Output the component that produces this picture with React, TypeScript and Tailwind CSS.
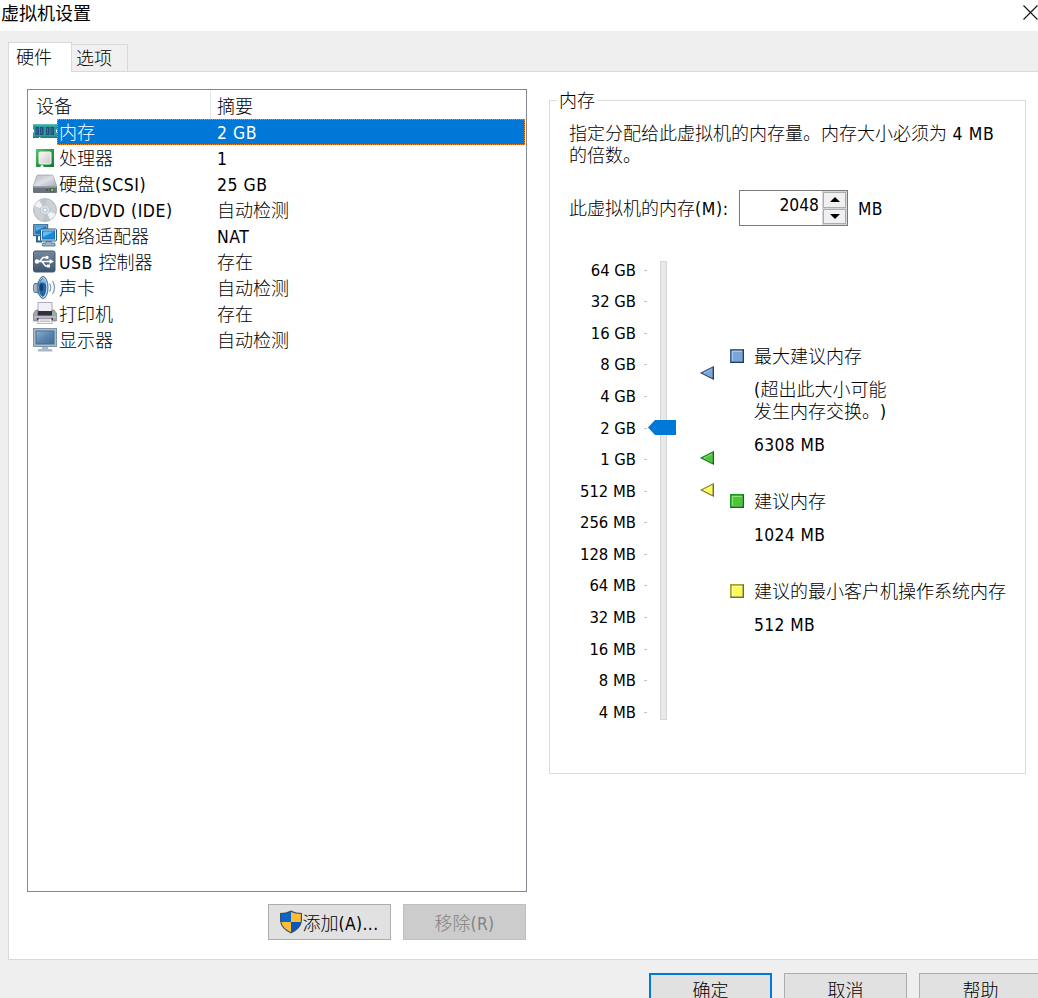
import React from "react";

const latinBase = "font-['DejaVu_Sans_Condensed','DejaVu_Sans',sans-serif] [font-stretch:condensed] leading-[0]";

function T({ children, className = "", latin = "text-[17.3px] tracking-[0.4px]" }: { children: string; className?: string; latin?: string }) {
  const runs = children.match(/[\u3000-\u9fff]+|[^\u3000-\u9fff]+/g) ?? [];
  return (
    <span className={`whitespace-pre [text-spacing-trim:space-all] ${className}`}>
      {runs.map((r, i) =>
        /[\u3000-\u9fff]/.test(r) ? (
          <span key={i} className="font-['Noto_Sans_CJK_SC',sans-serif] text-[18px] font-light">{r}</span>
        ) : (
          <span key={i} className={`${latinBase} ${latin}`}>{r}</span>
        )
      )}
    </span>
  );
}

const Ic = ({ children }: { children: React.ReactNode }) => (
  <svg className="h-[26px] w-[24px] shrink-0" viewBox="0 0 24 26">{children}</svg>
);

const icons = {
  memory: (
    <Ic>
      <path d="M0 5h24v5l-1 1v2l1 1v5H0v-5l1-1v-2l-1-1z" fill="#2f9b98" />
      <path d="M0 5h24v1.500H0z" fill="#55bdb6" />
      <path d="M2.500 8h3.500v8H2.500zM7 8h3.500v8H7zM13 8h3.500v8H13zM17.500 8H21v8h-3.500z" fill="#1d4f7c" />
      <path d="M3.500 9h1v6h-1zM8 9h1v6H8zM14 9h1v6h-1zM18.500 9h1v6h-1z" fill="#3376a8" />
      <path d="M0 17.500h24V19H0z" fill="#237977" />
      <path d="M6 18h1.500v1.500H6z" fill="#e8f8f0" />
    </Ic>
  ),
  cpu: (
    <Ic>
      <defs>
        <linearGradient id="cpuEdge" x1="0" y1="0" x2="1" y2="1"><stop offset="0" stopColor="#5cc46a" /><stop offset=".5" stopColor="#279a45" /><stop offset="1" stopColor="#127a33" /></linearGradient>
        <linearGradient id="cpuFace" x1="0" y1="0" x2="1" y2="1"><stop offset="0" stopColor="#fafafa" /><stop offset="1" stopColor="#c9c9c9" /></linearGradient>
      </defs>
      <rect x="3" y="4" width="18" height="18" fill="url(#cpuEdge)" />
      <rect x="6" y="7" width="12" height="12" rx="1" fill="url(#cpuFace)" stroke="#f4f4f4" />
      <path d="M7 22l2-2.500 2 2.500z" fill="#fff" />
    </Ic>
  ),
  disk: (
    <Ic>
      <defs>
        <linearGradient id="diskTop" x1="0" y1="0" x2="1" y2="1"><stop offset="0" stopColor="#b4b9c1" /><stop offset=".5" stopColor="#dde0e5" /><stop offset="1" stopColor="#a2a9b3" /></linearGradient>
      </defs>
      <path d="M5 4h14q1 0 1.500 1.500L24 16H0L3.500 5.500Q4 4 5 4z" fill="url(#diskTop)" stroke="#8b929d" strokeWidth=".6" />
      <path d="M0 15.500h24V21q0 1-1 1H1q-1 0-1-1z" fill="#6a727e" />
      <path d="M.5 15.500h23v1H.5z" fill="#a9afb8" />
      <path d="M13 18h2v2h-2z" fill="#4d5560" />
      <rect x="16.500" y="17.500" width="5" height="3" fill="#3d5c36" />
      <rect x="18" y="18" width="2.300" height="2" fill="#89d047" />
    </Ic>
  ),
  cd: (
    <Ic>
      <circle cx="12" cy="13" r="11.500" fill="#ccd1d7" stroke="#a3abb4" strokeWidth=".7" />
      <path d="M12 13L1.500 9A11 11 0 0 1 6 3.500zM12 13l10.500 4a11 11 0 0 1-5 6z" fill="#f1f3f5" />
      <path d="M12 13L7 3a11 11 0 0 1 7-1zM12 13l5 10a11 11 0 0 1-7 1z" fill="#b9c0c8" opacity=".7" />
      <circle cx="12" cy="13" r="4.800" fill="#dde1e5" stroke="#b2bac2" strokeWidth=".7" />
      <circle cx="12" cy="13" r="2" fill="#fff" stroke="#a0a9b2" strokeWidth=".8" />
    </Ic>
  ),
  network: (
    <Ic>
      <rect x=".7" y="1.700" width="14" height="11" fill="#8fb0c9" stroke="#27597f" />
      <rect x="2.200" y="3.200" width="11" height="8" fill="#1679c8" />
      <path d="M2.500 3.500h10L3 8z" fill="#57b3ec" />
      <path d="M4 13v5.500h5" fill="none" stroke="#2c6189" strokeWidth="2" />
      <rect x="7.500" y="6" width="16" height="12" rx="1" fill="#dbe7f0" stroke="#2a5f8b" />
      <rect x="9.500" y="8" width="12" height="8" fill="#1c86da" stroke="#2370a9" />
      <path d="M10 8.500h11L10 14z" fill="#5fbdf3" />
      <path d="M13 18.500h5v1.500h3.500q1 2 .5 3H9.500q-.5-1.500.5-3h3z" fill="#9cb6c9" stroke="#3b6a8e" strokeWidth=".8" />
    </Ic>
  ),
  usb: (
    <Ic>
      <defs>
        <linearGradient id="usbBg" x1="0" y1="0" x2="0" y2="1"><stop offset="0" stopColor="#74899d" /><stop offset="1" stopColor="#3d566f" /></linearGradient>
      </defs>
      <rect x=".5" y="2" width="21.500" height="21" rx="1.800" fill="url(#usbBg)" stroke="#44596e" />
      <path d="M3.500 12.500h14M6.500 12.500l3.500-4h3.500M9 12.500l3.500 4.500H15" fill="none" stroke="#fff" strokeWidth="1.500" />
      <circle cx="4" cy="12.500" r="2.200" fill="#fff" />
      <circle cx="14" cy="8.500" r="1.700" fill="#fff" />
      <path d="M16.500 10l4.500 2.500-4.500 2.500zM14 15.500h3v3h-3z" fill="#fff" />
    </Ic>
  ),
  sound: (
    <Ic>
      <path d="M1.500 8H4l6-6v21l-6-5H1.500Q0 17 0 13t1.500-5z" fill="#55748f" />
      <path d="M1.500 9h2.300v8H1.500Q.8 15 .8 13t.7-4z" fill="#9fb8cd" />
      <path d="M4 8.500L9 3v19l-5-4.500z" fill="#7796b1" />
      <ellipse cx="10" cy="12.500" rx="5" ry="11" fill="#c6d8e6" stroke="#37536f" strokeWidth=".9" />
      <ellipse cx="9.600" cy="12.500" rx="3.700" ry="9.200" fill="#1c69b0" />
      <path d="M7 8q1.500-5 4-4.500Q13 6 13 10q-2-4-6-2z" fill="#76c0ee" />
      <ellipse cx="8.500" cy="12.500" rx="1.700" ry="3.700" fill="#153f74" />
      <path d="M16.500 8.500q2.500 4 0 8M19.500 6q4 6.500 0 13" fill="none" stroke="#7f9fba" strokeWidth="1.300" />
    </Ic>
  ),
  printer: (
    <Ic>
      <path d="M5 1.500h14V11H5z" fill="#f1f0f6" stroke="#a3a1b3" strokeWidth=".9" />
      <path d="M3 9h2v2h14V9h2l3 4v6q0 1-1 1H1q-1 0-1-1v-6z" fill="#a5a3b2" stroke="#7a7889" strokeWidth=".7" />
      <path d="M5 10h14v4.500H4.500z" fill="#32313c" />
      <rect x="21" y="12.500" width="1.800" height="1.800" fill="#50df58" />
      <path d="M1 15.500h22v1H1z" fill="#cfcdd8" />
      <path d="M4 17h16v2H4z" fill="#43414e" />
      <path d="M6 17.500h12l1.500 5h-15z" fill="#f8f8fb" stroke="#9c9ba8" strokeWidth=".7" />
      <path d="M7 19h10M6.500 20.500h11" stroke="#bec0ca" />
    </Ic>
  ),
  display: (
    <Ic>
      <defs>
        <linearGradient id="screen" x1="0" y1="0" x2="1" y2="1"><stop offset="0" stopColor="#8db0d0" /><stop offset=".5" stopColor="#5c86b0" /><stop offset="1" stopColor="#3f6c99" /></linearGradient>
      </defs>
      <rect x=".5" y="1.500" width="23" height="18" fill="#a9bccd" stroke="#7c94aa" />
      <rect x="3" y="4" width="18" height="13" fill="url(#screen)" stroke="#4a6c8d" />
      <path d="M9 20h6v2h3.500q1 1 1 2.500h-15q0-1.500 1-2.500H9z" fill="#aab9c7" />
    </Ic>
  ),
};

const devices: [keyof typeof icons, string, string][] = [
  ["memory", "内存", "2 GB"],
  ["cpu", "处理器", "1"],
  ["disk", "硬盘(SCSI)", "25 GB"],
  ["cd", "CD/DVD (IDE)", "自动检测"],
  ["network", "网络适配器", "NAT"],
  ["usb", "USB 控制器", "存在"],
  ["sound", "声卡", "自动检测"],
  ["printer", "打印机", "存在"],
  ["display", "显示器", "自动检测"],
];

const sizes = ["64 GB", "32 GB", "16 GB", "8 GB", "4 GB", "2 GB", "1 GB", "512 MB", "256 MB", "128 MB", "64 MB", "32 MB", "16 MB", "8 MB", "4 MB"];

const tones = {
  blue: { fill: "#7ba5d6", light: "#a8c6e8", dark: "#1e3d6b", mid: "#3f689c" },
  green: { fill: "#4cc63a", light: "#8ce579", dark: "#08700d", mid: "#1c9720" },
  yellow: { fill: "#fff94f", light: "#ffffb0", dark: "#77710f", mid: "#aaa32b" },
};

function Square({ tone }: { tone: keyof typeof tones }) {
  const c = tones[tone];
  return (
    <svg className="h-[14px] w-[14px] shrink-0" viewBox="0 0 14 14">
      <path d="M0 0h14v14H0z" fill={c.dark} />
      <path d="M0 0h14l-1 1H1v12l-1 1z" fill={c.mid} />
      <path d="M1.500 1.500h11v11h-11z" fill={c.light} />
      <path d="M3 3h9v9H3z" fill={c.fill} />
    </svg>
  );
}

function Pointer({ tone, className }: { tone: keyof typeof tones; className: string }) {
  const c = tones[tone];
  return (
    <svg className={`absolute left-0 h-[14px] w-[14px] ${className}`} viewBox="0 0 14 14">
      <path d="M0 7L14 0v14z" fill={c.dark} />
      <path d="M0 7L14 0v1L2 7z" fill={c.mid} />
      <path d="M2.500 7L12.500 2v10z" fill={c.light} />
      <path d="M4 7.300L12 3.500v8z" fill={c.fill} />
    </svg>
  );
}

function Button({ children, look = "border border-[#adadad] bg-[#e1e1e1]" }: { children: React.ReactNode; look?: string }) {
  return (
    <button className={`flex h-[36px] w-[123px] shrink-0 items-center justify-center leading-[24px] ${look}`}>
      {children}
    </button>
  );
}

function Legend({ tone, label, value, note }: { tone: keyof typeof tones; label: string; value: string; note?: string[] }) {
  return (
    <div className="flex gap-[10px]">
      <div className="pt-[5px]"><Square tone={tone} /></div>
      <div className="flex flex-col gap-[11px] leading-[22px]">
        <T>{label}</T>
        {note && <div className="flex flex-col">{note.map((n) => <T key={n}>{n}</T>)}</div>}
        <T>{value}</T>
      </div>
    </div>
  );
}

export default function App() {
  return (
    <div className="flex h-[998px] w-[1038px] flex-col overflow-hidden bg-[#efefef] font-['Noto_Sans_CJK_SC',sans-serif] text-[18px] leading-[26px] text-black">
      <header className="flex h-[31px] shrink-0 justify-between bg-white pl-px">
        <span className="leading-[24px]">虚拟机设置</span>
        <svg className="mt-[5px] h-[15px] w-[15px]" viewBox="0 0 15 15">
          <path d="M.5.500l14 14M14.500.500l-14 14" stroke="#111" strokeWidth="1.100" />
        </svg>
      </header>

      <div className="flex h-[41px] shrink-0 items-end pl-[8px]">
        <div className="z-10 h-[30px] w-[64px] border border-b-0 border-[#d9d9d9] bg-white pl-[7px] leading-[26px]"><T>硬件</T></div>
        <div className="h-[28px] w-[56px] border-t border-r border-b border-[#d9d9d9] bg-[#f0f0f0] pl-[4px] leading-[25px]"><T>选项</T></div>
        <div className="h-px grow bg-[#d9d9d9]" />
      </div>

      <main className="ml-[8px] flex h-[888px] shrink-0 border-b border-l border-[#d9d9d9] bg-white pl-[18px]">
        <section className="w-[500px] shrink-0 pt-[17px]">
          <div className="h-[803px] border border-[#828790] pt-px">
            <div className="flex h-[28px] leading-[28px]">
              <div className="w-[183px] border-r border-[#e5e5e5] pl-[8px]"><T>设备</T></div>
              <div className="pl-[6px]"><T>摘要</T></div>
            </div>
            {devices.map(([icon, name, value], i) => (
              <div key={name} className="flex h-[26px] pr-px pl-[5px]">
                {icons[icon]}
                <div className={i === 0 ? "flex grow border border-dotted border-[#ff8728] bg-[#0078d7] leading-[22px] text-white" : "flex grow border border-transparent leading-[22px]"}>
                  <div className="w-[159px] pl-px"><T latin="text-[17.5px] tracking-[0.55px]">{name}</T></div>
                  <T latin="text-[17.5px] tracking-[0.5px]">{value}</T>
                </div>
              </div>
            ))}
          </div>
          <div className="mt-[12px] flex justify-end gap-[12px] pr-px">
            <Button>
              <svg className="h-[24px] w-[24px]" viewBox="0 0 24 24">
                <path d="M12 .5Q7 3 1 3v8q1 8 11 12.500Q22 19 23 11V3Q17 3 12 .5z" fill="#3c5062" />
                <path d="M12 2Q8 4 2.200 4v8H12z" fill="#0967cc" />
                <path d="M12 2q4 2 9.800 2v8H12zM2.300 12H12v10.200Q3.300 18 2.300 12z" fill="#ffbd35" />
                <path d="M12 12h9.700Q20.700 18 12 22.200z" fill="#0757bd" />
              </svg>
              <T className="mr-[2px] mb-px">添加(A)...</T>
            </Button>
            <Button look="border border-[#bfbfbf] bg-[#cccccc] text-[#838383]"><T className="mb-px">移除(R)</T></Button>
          </div>
        </section>

        <section className="mt-[28px] ml-[22px] h-[674px] w-[477px] shrink-0 border border-[#dcdcdc]">
          <h2 className="-mt-[14px] ml-[7px] h-[26px] w-[40px] bg-white pl-[2px] leading-[24px]"><T>内存</T></h2>
          <p className="mt-[8px] mb-px ml-[19px] flex flex-col leading-[22px]">
            <T latin="text-[17.5px] tracking-[0.6px]">指定分配给此虚拟机的内存量。内存大小必须为 4 MB</T>
            <T>的倍数。</T>
          </p>
          <div className="mt-[25px] ml-[19px] flex h-[36px] items-center">
            <T className="mb-[2px] w-[170px]" latin="text-[17.5px] tracking-[0.6px]">此虚拟机的内存(M):</T>
            <div className="flex h-[36px] w-[109px] justify-end border border-[#7a7a7a]">
              <T className="pr-[3px] leading-[25px]" latin="text-[17.3px]">2048</T>
              <div className="flex w-[25px] flex-col gap-px bg-[#d5d5dc] p-px">
                <div className="flex grow items-center justify-center border border-[#adadad] bg-[#f0f0f0]"><svg className="h-[5px] w-[10px]" viewBox="0 0 10 5"><path d="M0 5l5-5 5 5z" /></svg></div>
                <div className="flex grow items-center justify-center border border-[#adadad] bg-[#f0f0f0]"><svg className="h-[5px] w-[10px]" viewBox="0 0 10 5"><path d="M0 0l5 5 5-5z" /></svg></div>
              </div>
            </div>
            <T className="mb-[2px] ml-[10px]">MB</T>
          </div>

          <div className="mt-[27px] flex">
            <div className="-mt-px w-[97px]">
              {sizes.map((s) => (
                <div key={s} className="flex h-[31.570px] items-center justify-end">
                  <T className="leading-[22px]" latin="text-[16.5px]">{s}</T>
                  <span className="mt-[5px] ml-[8px] h-px w-[3px] bg-[#c4c4c4]" />
                </div>
              ))}
            </div>
            <div className="relative mt-[8px] ml-[13px] h-[459px] w-[7px] border border-[#d6d6d6] bg-[#e7eaea]">
              <svg className="absolute top-[158px] -left-[13px] h-[15px] w-[28px]" viewBox="0 0 28 15">
                <path d="M0 7.500L7 0h21v15H7z" fill="#0078d7" />
              </svg>
            </div>
            <div className="relative ml-[33px] w-[14px]">
              <Pointer tone="blue" className="top-[113px]" />
              <Pointer tone="green" className="top-[198px]" />
              <Pointer tone="yellow" className="top-[230px]" />
            </div>
            <div className="mt-[91px] ml-[16px] flex flex-col">
              <Legend tone="blue" label="最大建议内存" note={["(超出此大小可能", "发生内存交换。)"]} value="6308 MB" />
              <div className="mt-[35px]"><Legend tone="green" label="建议内存" value="1024 MB" /></div>
              <div className="mt-[35px]"><Legend tone="yellow" label="建议的最小客户机操作系统内存" value="512 MB" /></div>
            </div>
          </div>
        </section>
      </main>

      <footer className="mt-[13px] flex justify-start gap-[12px] pl-[649px]">
        <Button look="border-2 border-[#0078d7] bg-[#e1e1e1]"><T className="mb-[4px]">确定</T></Button>
        <Button><T className="mb-[4px]">取消</T></Button>
        <Button><T className="mb-[4px]">帮助</T></Button>
      </footer>
    </div>
  );
}
